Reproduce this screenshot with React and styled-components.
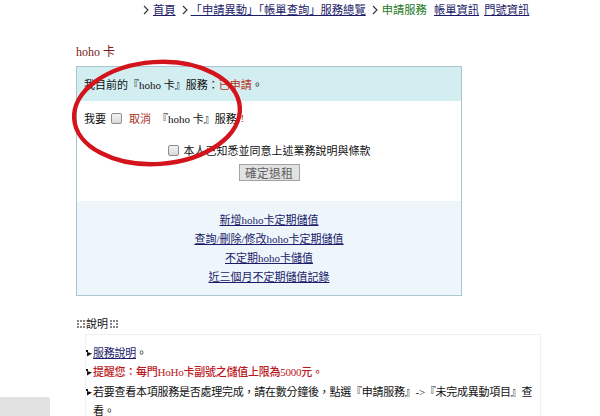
import React from 'react';
import styled, { createGlobalStyle } from 'styled-components';

const Global = createGlobalStyle`
  html, body { margin: 0; padding: 0; background: #fff; }
  body {
    font-family: "Liberation Serif", "Noto Sans CJK TC", serif;
    font-size: 11px;
    color: #111;
  }
`;

const Page = styled.div`
  position: relative;
  width: 600px;
  height: 416px;
  overflow: hidden;
`;

const Breadcrumb = styled.nav`
  display: flex;
  align-items: center;
  height: 20px;
  padding-left: 143px;
  font-size: 11.3px;
  line-height: 14px;
`;

const Chevron = styled.svg`
  width: 6px;
  height: 10px;
  margin: 0 ${p => p.$after || 4}px 0 ${p => p.$before || 0}px;
  flex: none;
`;

const CrumbLink = styled.a`
  color: #1c1c6a;
  text-decoration: underline;
  margin-right: ${p => p.$mr || 0}px;
`;

const Current = styled.span`
  color: #1d7a1d;
  margin-right: 7px;
`;

const Main = styled.main`
  padding-left: 76px;
`;

const Title = styled.h2`
  margin: 25px 0 7px;
  font-size: 12px;
  line-height: 14px;
  font-weight: normal;
  color: #7a1a1a;
`;

const Panel = styled.section`
  width: 384px;
  border: 1px solid #a9c6cf;
`;

const PanelHead = styled.div`
  height: 34px;
  display: flex;
  align-items: center;
  padding-left: 7px;
  background: #d2eef0;
`;

const Status = styled.span`
  color: #b5321a;
`;

const PanelBody = styled.div`
  display: flex;
  flex-direction: column;
  align-items: center;
  padding: 9px 0 20px;
  background: #fff;
`;

const Row = styled.label`
  display: flex;
  align-items: center;
  height: 16px;
  align-self: ${p => (p.$left ? 'flex-start' : 'center')};
  padding-left: ${p => (p.$left ? 7 : 0)}px;
  margin-top: ${p => p.$mt || 0}px;
`;

const Check = styled.input.attrs({ type: 'checkbox' })`
  appearance: none;
  width: 11px;
  height: 11px;
  margin: 0 ${p => p.$mr || 5}px 0 ${p => p.$ml || 0}px;
  border: 1px solid #8e8e8e;
  border-radius: 2px;
  background: linear-gradient(#f4f4f4, #d9d9d9);
  box-sizing: border-box;
`;

const Cancel = styled.span`
  color: #a8321a;
  margin-right: 6px;
`;

const Bang = styled.span`
  color: #b5321a;
`;

const Button = styled.button`
  margin-top: 6px;
  width: 61px;
  height: 17px;
  padding: 0;
  border: 1px solid #a3a3a3;
  background: #e2e2e2;
  color: #606060;
  font-family: "Noto Sans CJK TC", sans-serif;
  font-size: 12px;
  line-height: 15px;
`;

const LinkList = styled.div`
  display: flex;
  flex-direction: column;
  align-items: center;
  padding: 10px 0 8px;
  background: #eef6fc;
  line-height: 19px;
`;

const PanelLink = styled.a`
  color: #1c1c6a;
  text-decoration: underline;
`;

const NoteTitle = styled.h3`
  display: flex;
  align-items: center;
  margin: 21px 0 3px;
  font-size: 11px;
  line-height: 14px;
  font-weight: normal;
  color: #111;
`;

const Dots = styled.svg`
  width: 8px;
  height: 9px;
  margin: 0 ${p => p.$mr || 0}px 0 ${p => p.$ml || 0}px;
`;

const NoteBox = styled.div`
  width: 454px;
  margin-left: 9px;
  border: 1px solid #f1f1f1;
  padding: 9px 0 10px;
  letter-spacing: -0.25px;
`;

const NoteItem = styled.div`
  display: grid;
  grid-template-columns: 7px 1fr;
  line-height: 19.3px;
  color: ${p => p.$color || '#111'};
  font-weight: ${p => (p.$strong ? 500 : 'normal')};
`;

const Bullet = styled.svg`
  width: 6px;
  height: 7px;
  margin-top: 6px;
`;

const NoteLink = styled.a`
  color: #1c1c6a;
  text-decoration: underline;
`;

const Circle = styled.svg`
  position: absolute;
  left: 68px;
  top: 56px;
  width: 180px;
  height: 116px;
  pointer-events: none;
`;

const Corner = styled.div`
  position: absolute;
  left: 0;
  bottom: 0;
  width: 50px;
  height: 19px;
  background: #e2e2e2;
  border-top-right-radius: 3px;
`;

const Chev = ({ before, after }) => (
  <Chevron viewBox="0 0 6 10" $before={before} $after={after}>
    <polyline points="1,1 5,5 1,9" fill="none" stroke="#333" strokeWidth="1.1" />
  </Chevron>
);

const DotMark = ({ ml, mr }) => (
  <Dots viewBox="0 0 8 9" $ml={ml} $mr={mr}>
    {[[1, 1], [1, 4], [1, 7], [4, 1], [4, 7], [7, 1], [7, 4], [7, 7]].map(([x, y], i) => (
      <rect key={i} x={x - 0.8} y={y - 0.8} width="1.6" height="1.6" fill="#444" />
    ))}
  </Dots>
);

const Bul = () => (
  <Bullet viewBox="0 0 6 7">
    <rect x="0" y="0" width="2" height="2" fill="#111" />
    <path d="M1 2 L6 3.5 L1 6.5 Z" fill="#111" />
  </Bullet>
);

export default function App() {
  return (
    <Page>
      <Global />
      <Breadcrumb>
        <Chev after={4} />
        <CrumbLink href="#">首頁</CrumbLink>
        <Chev before={6} after={3} />
        <CrumbLink href="#" $mr={6}>「申請異動」「帳單查詢」服務總覽</CrumbLink>
        <Chev after={4} />
        <Current>申請服務</Current>
        <CrumbLink href="#" $mr={5}>帳單資訊</CrumbLink>
        <CrumbLink href="#">門號資訊</CrumbLink>
      </Breadcrumb>

      <Main>
        <Title>hoho 卡</Title>
        <Panel>
          <PanelHead>
            我目前的『hoho 卡』服務：<Status>已申請</Status>。
          </PanelHead>
          <PanelBody>
            <Row $left>
              我要<Check $ml={5} $mr={7} /><Cancel>取消</Cancel>『hoho 卡』服務<Bang>!!</Bang>
            </Row>
            <Row $mt={16}>
              <Check $mr={5} />本人已知悉並同意上述業務說明與條款
            </Row>
            <Button>確定退租</Button>
          </PanelBody>
          <LinkList>
            <PanelLink href="#">新增hoho卡定期儲值</PanelLink>
            <PanelLink href="#">查詢/刪除/修改hoho卡定期儲值</PanelLink>
            <PanelLink href="#">不定期hoho卡儲值</PanelLink>
            <PanelLink href="#">近三個月不定期儲值記錄</PanelLink>
          </LinkList>
        </Panel>

        <NoteTitle>
          <DotMark ml={1} mr={1} />說明<DotMark ml={2} />
        </NoteTitle>
        <NoteBox>
          <NoteItem>
            <Bul />
            <span><NoteLink href="#">服務說明</NoteLink>。</span>
          </NoteItem>
          <NoteItem $color="#bb171c" $strong>
            <Bul />
            <span>提醒您：每門HoHo卡副號之儲值上限為5000元。</span>
          </NoteItem>
          <NoteItem>
            <Bul />
            <span>若要查看本項服務是否處理完成，請在數分鐘後，點選『申請服務』-&gt;『未完成異動項目』查看。</span>
          </NoteItem>
        </NoteBox>
      </Main>

      <Circle viewBox="0 0 180 116">
        <ellipse cx="89" cy="57" rx="83" ry="51" fill="none" stroke="#d3141c" strokeWidth="4.4"
          transform="rotate(-4 89 57)" />
      </Circle>
      <Corner />
    </Page>
  );
}
